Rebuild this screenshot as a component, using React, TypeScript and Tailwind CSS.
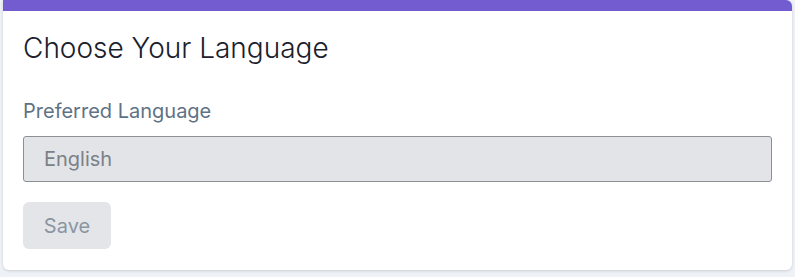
export default function App() {
    return (
        <div className="min-h-screen bg-[#eef2f6] px-[3px]" style={{ fontFamily: 'Inter, "Noto Sans", sans-serif' }}>
            <div className="bg-white rounded-b-md rounded-tr-md overflow-hidden shadow-[0_1px_3px_rgba(0,0,0,0.15)]">
                {/* Accent bar */}
                <div className="h-[11px] bg-[#735cd0]" />

                <div className="px-5 pt-[20px] pb-[21px]">
                    <h2 className="text-[28px] leading-[34px] font-light text-[#1a202c]">Choose Your Language</h2>

                    <label className="block mt-[34px] text-[20px] leading-[24px] text-[#5f7285]">
                        Preferred Language
                    </label>

                    <div className="mt-[13px] h-[46px] w-[749px] flex items-center px-5 bg-[#e2e4e8] border border-[#8c9096] rounded-[3px] text-[20px] text-[#7c8087]">
                        English
                    </div>

                    <button
                        type="button"
                        disabled
                        className="mt-5 h-[47px] w-[88px] rounded-md bg-[#e3e5e9] text-[20px] text-[#8a95a1]"
                    >
                        Save
                    </button>
                </div>
            </div>
        </div>
    );
}
